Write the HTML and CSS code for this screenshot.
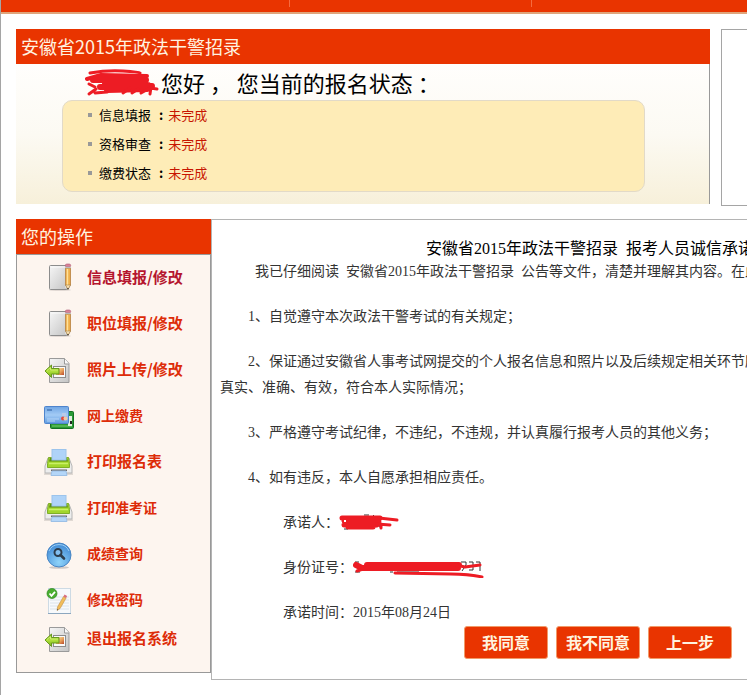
FILE: index.html
```html
<!DOCTYPE html>
<html lang="zh-CN">
<head>
    <meta charset="UTF-8">
    <title>安徽省2015年政法干警招录</title>
    <link rel="stylesheet" href="styles.css">
</head>
<body>
    <!-- 图标 -->
    <svg class="icon-defs" aria-hidden="true">
        <defs>
            <linearGradient id="paper" x1="0" y1="0" x2="1" y2="1">
                <stop offset="0" stop-color="#f6f6f6"/>
                <stop offset="1" stop-color="#c4c4c4"/>
            </linearGradient>
            <linearGradient id="card" x1="0" y1="0" x2="0" y2="1">
                <stop offset="0" stop-color="#6fa5e4"/>
                <stop offset="0.5" stop-color="#a3cbf5"/>
                <stop offset="1" stop-color="#5e9ae0"/>
            </linearGradient>
            <linearGradient id="green" x1="0" y1="0" x2="0" y2="1">
                <stop offset="0" stop-color="#76ad1c"/>
                <stop offset="0.5" stop-color="#b0e03c"/>
                <stop offset="1" stop-color="#71ab16"/>
            </linearGradient>
            <linearGradient id="photo" x1="0" y1="0" x2="1" y2="1">
                <stop offset="0" stop-color="#fff3b8"/>
                <stop offset="0.6" stop-color="#e59a55"/>
                <stop offset="1" stop-color="#b8482c"/>
            </linearGradient>
            <radialGradient id="ball" cx="0.5" cy="0.8" r="0.8">
                <stop offset="0" stop-color="#8fd4fa"/>
                <stop offset="1" stop-color="#3d86d3"/>
            </radialGradient>
        </defs>
        <symbol id="icon-note" viewBox="0 0 32 30">
            <ellipse cx="16" cy="27" rx="11" ry="1" fill="#e2d9d4"/>
            <rect x="5.500" y="2.500" width="18" height="24" rx="1" fill="url(#paper)" stroke="#8c8c8c"/>
            <path d="M7 4h15v21" fill="none" stroke="#fff" opacity=".8"/>
            <path d="M21.500 5h5v17l-2.500 4-2.500-4z" fill="#eeb04c" stroke="#ad7432" stroke-width=".7"/>
            <path d="M23.500 6v16" stroke="#ffe09a" stroke-width="1.400"/>
            <rect x="21.300" y="1" width="5.400" height="3" rx="1.500" fill="#d98399" stroke="#ad566e" stroke-width=".6"/>
            <path d="M21.300 4.500h5.400" stroke="#bbb" stroke-width="1.500"/>
            <path d="M21.500 22h5L24 26.500z" fill="#f7dfb0" stroke="#8f7041" stroke-width=".5"/>
            <path d="M23.200 25h1.600L24 27z" fill="#333"/>
        </symbol>
        <symbol id="icon-export" viewBox="0 0 32 30">
            <path d="M5.500 3.500h15l4.500 5v19H5.500z" fill="url(#paper)" stroke="#9a9a9a"/>
            <path d="M20.500 3.500V9H25" fill="#fafafa" stroke="#999"/>
            <rect x="9.500" y="11.500" width="12" height="11" fill="#fafafa" stroke="#8c8c8c"/>
            <rect x="12" y="13" width="8" height="7" fill="url(#photo)"/>
            <path d="M1 16l6.500-6v3.500H15v5.500H7.500v3.500z" fill="url(#green)" stroke="#679a1d"/>
            <path d="M3 15.500l3.500-3v2.500H14" fill="none" stroke="#d1ef70"/>
        </symbol>
        <symbol id="icon-card" viewBox="0 0 32 30">
            <rect x="6.500" y="10.500" width="23" height="17" rx="1" fill="#2a9a35" stroke="#137021"/>
            <path d="M8 25h20" stroke="#76cd6c"/>
            <rect x="24" y="15" width="4" height="10" fill="#e1f1df"/>
            <path d="M26 20h2v3h-2z" fill="#252525"/>
            <rect x=".5" y="5.500" width="24" height="17" rx="1" fill="url(#card)" stroke="#4f84cc"/>
            <path d="M3 9h5" stroke="#285a9e"/>
            <path d="M3 18h12M3 20h8" stroke="#c5e0fb" stroke-width=".8"/>
            <path d="M18 12h4v3h-4z" fill="#b9cbe8"/>
            <circle cx="19" cy="17.500" r="2" fill="#e34b3c"/>
            <circle cx="21.500" cy="17.500" r="2" fill="#f0c9a6"/>
        </symbol>
        <symbol id="icon-printer" viewBox="0 0 32 30">
            <path d="M0 27h29" stroke="#c3bdb8"/>
            <path d="M4 11h21l3 8v7H1v-7z" fill="#ededed" stroke="#b5b5b5"/>
            <path d="M4.500 10.500h20l1 6v4h-22v-4z" fill="#a2d62c" stroke="#7fae28"/>
            <path d="M6 11h17l1 3.500H5z" fill="#5f9014"/>
            <rect x="8" y="2.500" width="14" height="10.500" fill="#afd3f8" stroke="#9cc4ec"/>
            <path d="M5 16.500h19" stroke="#c9f067" stroke-width="1.500"/>
            <path d="M7 22.500h16v1.500H7z" fill="#6b6b6b"/>
            <path d="M8 24h14l1 4.500H7z" fill="#b4d6f8" stroke="#9cc0e6"/>
        </symbol>
        <symbol id="icon-search" viewBox="0 0 32 30">
            <ellipse cx="15" cy="28.500" rx="10" ry="1.300" fill="#d0c9c6"/>
            <circle cx="15" cy="16" r="12" fill="url(#ball)" stroke="#4a86c4"/>
            <path d="M5 12a11 11 0 0 1 20 0" fill="none" stroke="#9cd0f5"/>
            <circle cx="14" cy="13.500" r="3.500" fill="#82bff0" stroke="#2d3d4d" stroke-width="2"/>
            <path d="M16.500 16l3.500 3.500" stroke="#2d3d4d" stroke-width="2.600" stroke-linecap="round"/>
        </symbol>
        <symbol id="icon-edit" viewBox="0 0 32 30">
            <rect x="4.500" y="3.500" width="22" height="25" fill="#f7f9fb" stroke="#cddae4"/>
            <path d="M4 28.500h23" stroke="#8ca7bf"/>
            <path d="M6 12h19M6 15h19M6 18h19M6 21h19M6 24h19" stroke="#dbe3ea"/>
            <path d="M19.500 11.500l2.600 1.500-6 10.500-3 2 .4-3.500z" fill="#f2bd58" stroke="#c08f4b" stroke-width=".6"/>
            <path d="M19.500 11.500l1-2 2.600 1.500-1 2z" fill="#d96d7d"/>
            <path d="M13 25.500l.2-1.500 1 .7z" fill="#444"/>
            <circle cx="8" cy="8.500" r="5" fill="#49ae30" stroke="#2d861e" stroke-width=".7"/>
            <path d="M5.500 8.500l2 2.300 3.500-4" fill="none" stroke="#fff" stroke-width="1.800"/>
        </symbol>
    </svg>

    <div class="page">
        <div class="top-bar">
            <span></span>
            <span></span>
        </div>

        <div class="main">
            <div class="row-top">
                <div class="status">
                    <h2 class="panel-title">安徽省2015年政法干警招录</h2>
                    <div class="status-body">
                        <p class="hello">
                            <svg class="scrawl" width="74" height="28" viewBox="0 0 74 28" aria-hidden="true">
                                <g fill="none" stroke="#ed1c24" stroke-linecap="round" stroke-linejoin="round">
                                    <path d="M5 4Q22 1 38 2t17 2" stroke-width="3"/>
                                    <path d="M2 10L16 6 62 7" stroke-width="4"/>
                                    <path d="M8 11h53L20 15l43 1-48 2 52-1-45 4 40-1" stroke-width="6"/>
                                    <path d="M4 15l6 3M4 25l7-5M10 24l12-1M38 24l7-5M47 24l6-4M56 24l9-5 7 1M66 18l-1 7" stroke-width="3"/>
                                </g>
                            </svg>
                            <span>您好&nbsp;，&nbsp;您当前的报名状态&nbsp;：</span>
                        </p>
                        <ul class="status-list">
                            <li>信息填报&nbsp; <b>:</b> <span class="undone">未完成</span></li>
                            <li>资格审查&nbsp; <b>:</b> <span class="undone">未完成</span></li>
                            <li>缴费状态&nbsp; <b>:</b> <span class="undone">未完成</span></li>
                        </ul>
                    </div>
                </div>
                <div class="side-box"></div>
            </div>

            <div class="row-bottom">
                <div class="menu">
                    <h2 class="panel-title">您的操作</h2>
                    <ul class="menu-list">
                        <li><a class="active" href="#"><svg><use href="#icon-note"/></svg><span>信息填报/修改</span></a></li>
                        <li><a href="#"><svg><use href="#icon-note"/></svg><span>职位填报/修改</span></a></li>
                        <li><a href="#"><svg><use href="#icon-export"/></svg><span>照片上传/修改</span></a></li>
                        <li><a class="small" href="#"><svg><use href="#icon-card"/></svg><span>网上缴费</span></a></li>
                        <li><a href="#"><svg><use href="#icon-printer"/></svg><span>打印报名表</span></a></li>
                        <li><a class="small" href="#"><svg><use href="#icon-printer"/></svg><span>打印准考证</span></a></li>
                        <li><a class="small" href="#"><svg><use href="#icon-search"/></svg><span>成绩查询</span></a></li>
                        <li><a class="small" href="#"><svg><use href="#icon-edit"/></svg><span>修改密码</span></a></li>
                        <li class="last"><a href="#"><svg><use href="#icon-export"/></svg><span>退出报名系统</span></a></li>
                    </ul>
                </div>

                <div class="promise">
                    <h1>安徽省2015年政法干警招录&nbsp;&nbsp;报考人员诚信承诺书</h1>
                    <p>&nbsp;&nbsp;我已仔细阅读&nbsp;&nbsp;安徽省2015年政法干警招录&nbsp;&nbsp;公告等文件，清楚并理解其内容。在此我郑重承诺：</p>
                    <p>1、自觉遵守本次政法干警考试的有关规定；</p>
                    <p>2、保证通过安徽省人事考试网提交的个人报名信息和照片以及后续规定相关环节所提供的信息、证件和各类材料内容真实、准确、有效，符合本人实际情况；</p>
                    <p>3、严格遵守考试纪律，不违纪，不违规，并认真履行报考人员的其他义务；</p>
                    <p>4、如有违反，本人自愿承担相应责任。</p>
                    <p class="sign">承诺人：<svg class="scrawl" width="62" height="18" viewBox="0 0 62 18" aria-hidden="true">
                            <path d="M25 1h5M34 1l3 3M5 15h4M40 11l2 4" fill="none" stroke="#333"/>
                            <g fill="none" stroke="#ed1c24" stroke-linecap="round" stroke-linejoin="round">
                                <path d="M3 4h38L5 7h35L5 11h33L9 13h25" stroke-width="5"/>
                                <path d="M40 4l18 2M38 10l13 1M42 10v4" stroke-width="3"/>
                            </g>
                            <path d="M5 6h2v2H5z" fill="#fff"/>
                        </svg></p>
                    <p class="sign">身份证号：<svg class="scrawl" width="132" height="20" viewBox="0 0 132 20" aria-hidden="true">
                            <path d="M2 4h4M2 14h5M37 14h3M44 14h22M108 4h5v3l-4 6M116 4h4v8h-4M123 4h4v9" fill="none" stroke="#333"/>
                            <g fill="none" stroke="#ed1c24" stroke-linecap="round" stroke-linejoin="round">
                                <path d="M3 7l6 3h96L14 7h92" stroke-width="6"/>
                                <path d="M4 13l12-4M98 6l14 3 15-2" stroke-width="3"/>
                                <path d="M42 15l56 1q18 0 31 3" stroke-width="3"/>
                            </g>
                        </svg></p>
                    <p class="sign">承诺时间：2015年08月24日</p>
                    <div class="buttons">
                        <button type="button">我同意</button>
                        <button type="button">我不同意</button>
                        <button type="button">上一步</button>
                    </div>
                </div>
            </div>
        </div>
    </div>
</body>
</html>
```

FILE: styles.css
```css
:root {
    --red: #e93400;
    --line: #a5a5a5;
    --text: #333;
}

* {
    margin: 0;
    padding: 0;
    box-sizing: border-box;
}

body {
    font-family: "Liberation Serif", "Noto Sans CJK SC", serif;
    font-size: 14px;
    color: var(--text);
    background: #fff;
    overflow: hidden;
}

ul {
    list-style: none;
}

.icon-defs {
    position: absolute;
    width: 0;
    height: 0;
}

/* 页面整体，窄屏时右侧被裁掉 */
.page {
    min-width: 1001px;
    min-height: 100vh;
    border-left: 1px solid var(--line);
    border-right: 1px solid var(--line);
}

.top-bar {
    display: flex;
    height: 14px;
    background: var(--red);
    border-bottom: 2px solid #dfa57c;
}

.top-bar span {
    width: 242px;
    height: 7px;
    border-right: 1px solid #f56b3f;
}

.top-bar span:first-child {
    width: 289px;
}

.main {
    padding: 15px;
}

.panel-title {
    height: 35px;
    padding-left: 5px;
    font-family: "Noto Sans CJK SC", sans-serif;
    font-size: 18px;
    font-weight: normal;
    line-height: 34px;
    color: #fff3e0;
    background: var(--red);
}

/* 报名状态 */
.row-top {
    display: flex;
    gap: 11px;
    margin-bottom: 13px;
}

.status {
    flex: 1;
    margin-bottom: 2px;
}

.status-body {
    padding: 5px 64px 12px 46px;
    border-right: 1px solid #999;
    background: linear-gradient(#fffefc, #fcfaf3 50%, #f7f0da);
}

.hello {
    display: flex;
    align-items: flex-start;
    gap: 2px;
    height: 31px;
    padding-left: 23px;
    font-family: "Noto Sans CJK SC", sans-serif;
    font-size: 22px;
    line-height: 26px;
    color: #000;
}

.status-list {
    display: grid;
    gap: 2px;
    padding-bottom: 5px;
    padding-left: 25px;
    border: 1px solid #e2dac8;
    border-radius: 10px;
    background: #feecb7;
    font-family: "Noto Sans CJK SC", sans-serif;
    font-size: 13px;
    line-height: 27px;
    color: #000;
}

.status-list li {
    display: flex;
    align-items: center;
    gap: 5px;
}

.status-list li::before {
    content: "";
    width: 4px;
    height: 4px;
    margin-right: 2px;
    background: #999;
}

.undone {
    color: #c71500;
}

.side-box {
    width: 264px;
    border: 1px solid var(--line);
}

/* 左侧菜单 */
.row-bottom {
    display: flex;
    align-items: flex-start;
}

.menu {
    width: 195px;
}

.menu-list {
    padding-bottom: 17px;
    border: 1px solid #999;
    background: #fdf5ef;
}

.menu-list a {
    display: flex;
    align-items: center;
    gap: 11px;
    height: 46px;
    padding-left: 27px;
    font-family: "Noto Sans CJK SC", sans-serif;
    font-size: 15px;
    font-weight: bold;
    color: #dd2c08;
    text-decoration: none;
}

.menu-list a.small {
    font-size: 14px;
}

.menu-list a.active {
    color: #b5152e;
}

.menu-list .last a {
    height: 32px;
}

.menu-list svg {
    width: 32px;
    height: 30px;
}

.menu-list span {
    padding-bottom: 3px;
}

/* 承诺书 */
.promise {
    flex: 1;
    padding: 19px 8px 20px;
    border: 1px solid #b4b4b4;
}

.promise h1 {
    font-size: 16px;
    font-weight: normal;
    line-height: 20px;
    text-align: center;
    color: #000;
}

.promise p {
    margin-bottom: 19px;
    line-height: 26px;
    text-indent: 28px;
}

.promise .sign {
    display: flex;
    align-items: center;
    height: 26px;
    padding-left: 63px;
    text-indent: 0;
}

.promise .sign:nth-last-child(2) {
    margin-bottom: 0;
}

.buttons {
    display: flex;
    justify-content: center;
    gap: 8px;
}

.buttons button {
    width: 84px;
    height: 33px;
    padding-bottom: 2px;
    border: 1px solid #f19a68;
    border-radius: 3px;
    background: var(--red);
    font-family: "Noto Sans CJK SC", sans-serif;
    font-size: 16px;
    font-weight: bold;
    color: #fff3df;
    cursor: pointer;
}
```
